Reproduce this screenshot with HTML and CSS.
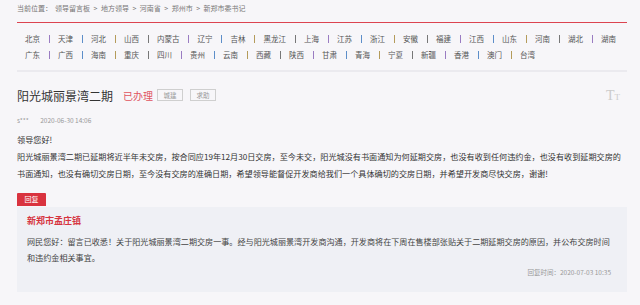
FILE: index.html
```html
<!DOCTYPE html>
<html lang="zh-CN">

<head>
    <meta charset="UTF-8">
    <meta name="viewport" content="width=device-width, initial-scale=1.0">
    <title>新郑市委书记 - 领导留言板</title>

    <link rel="stylesheet" href="styles.css">

</head>

<body>

    <div class="page">
        <div class="crumbs">
            当前位置：<a href="#">领导留言板</a><span class="gt">&gt;</span><a href="#">地方领导</a><span class="gt">&gt;</span><a href="#">河南省</a><span class="gt">&gt;</span><a href="#">郑州市</a><span class="gt">&gt;</span><a href="#">新郑市委书记</a>
        </div>

        <div class="areas">
            <div class="area-row">
                <a href="#">北京</a><i></i><a href="#">天津</a><i></i><a href="#">河北</a><i></i><a href="#">山西</a><i></i><a href="#">内蒙古</a><i></i><a href="#">辽宁</a><i></i><a href="#">吉林</a><i></i><a href="#">黑龙江</a><i></i><a href="#">上海</a><i></i><a href="#">江苏</a><i></i><a href="#">浙江</a><i></i><a href="#">安徽</a><i></i><a href="#">福建</a><i></i><a href="#">江西</a><i></i><a href="#">山东</a><i></i><a href="#">河南</a><i></i><a href="#">湖北</a><i></i><a href="#">湖南</a>
            </div>
            <div class="area-row">
                <a href="#">广东</a><i></i><a href="#">广西</a><i></i><a href="#">海南</a><i></i><a href="#">重庆</a><i></i><a href="#">四川</a><i></i><a href="#">贵州</a><i></i><a href="#">云南</a><i></i><a href="#">西藏</a><i></i><a href="#">陕西</a><i></i><a href="#">甘肃</a><i></i><a href="#">青海</a><i></i><a href="#">宁夏</a><i></i><a href="#">新疆</a><i></i><a href="#">香港</a><i></i><a href="#">澳门</a><i></i><a href="#">台湾</a>
            </div>
        </div>

        <div class="title-row">
            <h1>阳光城丽景湾二期</h1>
            <span class="state">已办理</span>
            <span class="tag">城建</span>
            <span class="tag">求助</span>
            <span class="font-size"><b>T</b><small>T</small></span>
        </div>

        <div class="meta">
            <span>s***</span>
            <span>2020-06-30 14:06</span>
        </div>

        <div class="content">
            <p>领导您好!</p>
            <p>阳光城丽景湾二期已延期将近半年未交房，按合同应19年12月30日交房，至今未交，阳光城没有书面通知为何延期交房，也没有收到任何违约金，也没有收到延期交房的书面通知，也没有确切交房日期，至今没有交房的准确日期，希望领导能督促开发商给我们一个具体确切的交房日期，并希望开发商尽快交房，谢谢!</p>
        </div>

        <div class="reply-tab">回复</div>
        <div class="reply">
            <h2>新郑市孟庄镇</h2>
            <p>网民您好：留言已收悉！关于阳光城丽景湾二期交房一事。经与阳光城丽景湾开发商沟通，开发商将在下周在售楼部张贴关于二期延期交房的原因，并公布交房时间和违约金相关事宜。</p>
            <div class="reply-time">回复时间：2020-07-03 10:35</div>
        </div>
    </div>

</body>

</html>
```

FILE: styles.css
```css
body {
    margin: 0;
    background: #f7f6f9;
    font-family: "Noto Sans CJK SC", "Noto Sans", sans-serif;
    color: #333;
}

a {
    color: inherit;
    text-decoration: none;
}

p,
h1,
h2 {
    margin: 0;
}

.page {
    padding: 0 13px 0 17px;
}

.crumbs {
    height: 22px;
    line-height: 16px;
    font-size: 7px;
    color: #777;
    border-bottom: 1px solid #dc4450;
}

.crumbs a:first-child {
    margin-left: 3px;
}

.crumbs .gt {
    margin: 0 3.5px;
}

.areas {
    padding: 8px 0 7px 8px;
    border-bottom: 2px solid #ebeaef;
}

.area-row {
    height: 16px;
    line-height: 16px;
    font-size: 7.5px;
    color: #555;
    white-space: nowrap;
}

.area-row i {
    display: inline-block;
    width: 1px;
    height: 8px;
    margin: 0 8.5px;
    vertical-align: -1px;
    background: #777;
}

.area-row i:nth-of-type(4n+1) {
    background: #9a7cc2;
}

.area-row i:nth-of-type(4n+2) {
    background: #5d8ec9;
}

.area-row i:nth-of-type(4n+3) {
    background: #b49b5a;
}

.title-row {
    display: flex;
    align-items: center;
    height: 20px;
    margin-top: 13px;
}

.title-row h1 {
    font-size: 12px;
    font-weight: normal;
    color: #333;
    margin-right: 10px;
}

.state {
    font-size: 10px;
    color: #e0535f;
    margin-right: 4px;
}

.tag {
    display: inline-block;
    width: 24px;
    height: 10px;
    line-height: 10px;
    text-align: center;
    font-size: 6.5px;
    color: #999;
    border: 1px solid #cfcfcf;
    margin-right: 7px;
}

.font-size {
    margin-left: auto;
    margin-right: 7px;
    font-family: "Liberation Serif", serif;
    color: #cbcbcb;
}

.font-size b {
    font-weight: normal;
    font-size: 14px;
}

.font-size small {
    font-size: 9px;
}

.meta {
    margin-top: 9px;
    height: 12px;
    line-height: 12px;
    font-size: 6.5px;
    color: #999;
}

.meta span+span {
    margin-left: 10px;
}

.content {
    margin-top: 5px;
    font-size: 8.15px;
    line-height: 17px;
}

.reply-tab {
    display: inline-block;
    margin-top: 11px;
    width: 29px;
    height: 13px;
    line-height: 13px;
    text-align: center;
    background: #d9333f;
    color: #fff;
    font-size: 7px;
    border-radius: 1px 1px 0 0;
}

.reply {
    display: block;
    background: #eff0f5;
    padding: 6px 14px 15px 10px;
}

.reply h2 {
    font-size: 9px;
    line-height: 15px;
    color: #d6343f;
}

.reply p {
    margin-top: 6px;
    font-size: 8.1px;
    line-height: 16px;
    color: #444;
}

.reply-time {
    margin-top: 1px;
    text-align: right;
    font-size: 6.5px;
    line-height: 10px;
    color: #999;
    padding-right: 2px;
}
```
